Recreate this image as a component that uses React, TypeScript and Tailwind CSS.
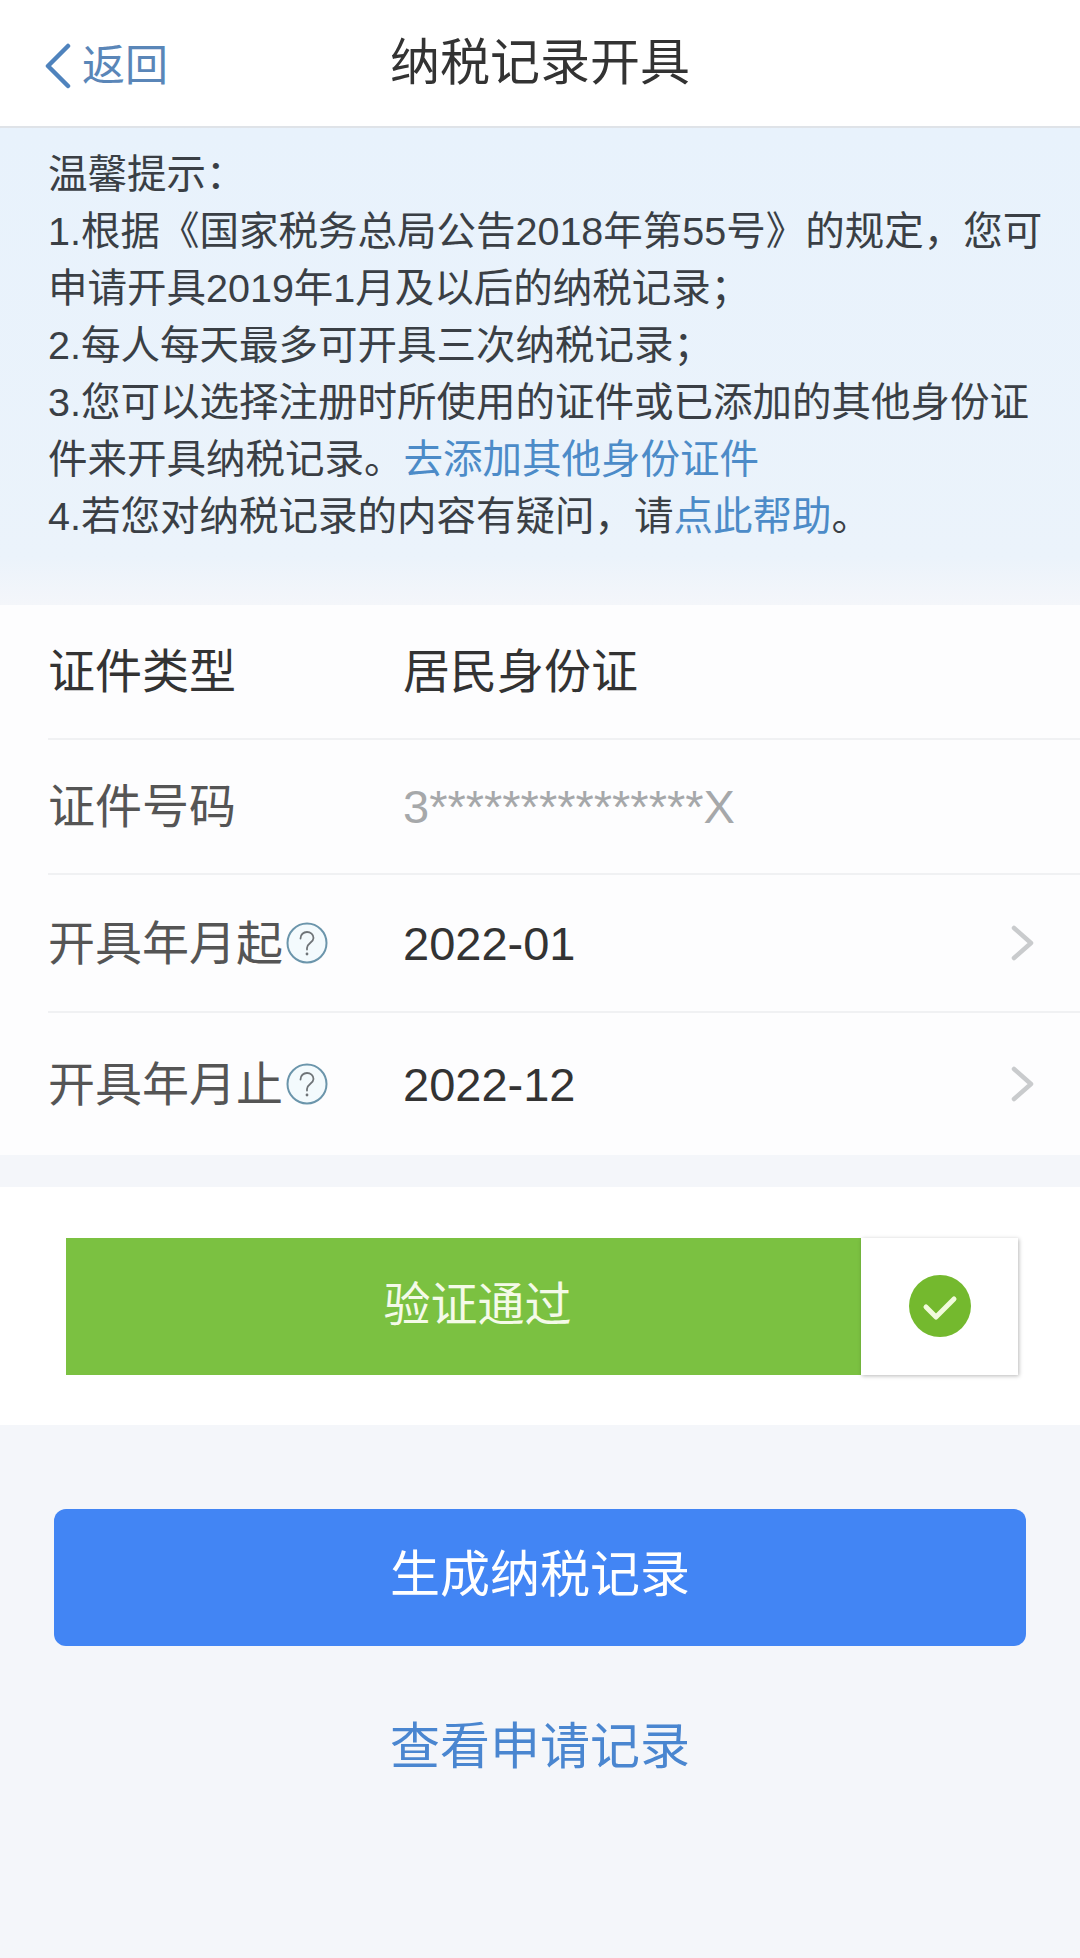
import React from 'react';

const fontStack = '"Liberation Sans", "Noto Sans CJK SC", sans-serif';

const HelpIcon = () => (
    <svg className="w-[42px] h-[42px] shrink-0 ml-[3px]" viewBox="0 0 42 42" fill="none">
        <circle cx="21" cy="21" r="19.5" fill="#f3fafd" stroke="#6b95ab" strokeWidth="2" />
        <path d="M14.5 16.5c0-4 3-6.5 6.5-6.5s6.5 2.5 6.5 6c0 4.5-6.5 5-6.5 10v1.5" stroke="#6f7478" strokeWidth="1.8" strokeLinecap="round" />
        <circle cx="21" cy="32" r="1.4" fill="#6f7478" />
    </svg>
);

const Chevron = () => (
    <svg className="w-[24px] h-[36px] shrink-0" viewBox="0 0 24 36" fill="none">
        <path d="M3 3l17 15L3 33" stroke="#c9cbcd" strokeWidth="4.5" strokeLinecap="round" strokeLinejoin="round" />
    </svg>
);

const FormRow = ({ height, label, labelClass, help, value, valueClass, arrow, border = true }: {
    height: string;
    label: string;
    labelClass: string;
    help?: boolean;
    value: string;
    valueClass: string;
    arrow?: boolean;
    border?: boolean;
}) => (
    <div className={`${height} flex items-center pr-[45px] ${border ? 'border-b-2 border-[#f0f1f3]' : ''}`}>
        <div className="w-[355px] flex items-center shrink-0">
            <span className={`text-[47px] leading-none ${labelClass}`}>{label}</span>
            {help && <HelpIcon />}
        </div>
        <span className={`flex-1 text-[47px] leading-none ${valueClass}`}>{value}</span>
        {arrow && <Chevron />}
    </div>
);

export default function App() {
    return (
        <div lang="zh-CN" className="w-[1080px] min-h-[1958px] bg-[#f4f6fa] flex flex-col" style={{ fontFamily: fontStack }}>
            {/* Header */}
            <div className="h-[128px] bg-white border-b-2 border-[#dfe3e8] grid grid-cols-[1fr_auto_1fr] items-center">
                <div className="flex items-center pl-[45px] pt-[6px]">
                    <svg className="w-[26px] h-[46px] shrink-0" viewBox="0 0 26 46" fill="none">
                        <path d="M23 3L3 23l20 20" stroke="#4f83bd" strokeWidth="4.5" strokeLinecap="round" strokeLinejoin="round" />
                    </svg>
                    <span className="ml-[11px] text-[43px] leading-none text-[#5a86b8]">返回</span>
                </div>
                <div className="text-[50px] leading-none text-[#333]">纳税记录开具</div>
                <div />
            </div>

            {/* Notice */}
            <div className="h-[477px] pt-[18px] pl-[48px] bg-gradient-to-b from-[#e8f2fc] via-[#ebf3fb] via-90% to-[#f4f6fa] text-[39.5px] leading-[57px] text-[#3a3f45] whitespace-nowrap">
                <div>温馨提示：</div>
                <div>1.根据《国家税务总局公告2018年第55号》的规定，您可</div>
                <div>申请开具2019年1月及以后的纳税记录；</div>
                <div>2.每人每天最多可开具三次纳税记录；</div>
                <div>3.您可以选择注册时所使用的证件或已添加的其他身份证</div>
                <div>件来开具纳税记录。<span className="text-[#4c8bc8]">去添加其他身份证件</span></div>
                <div>4.若您对纳税记录的内容有疑问，请<span className="text-[#4c8bc8]">点此帮助</span>。</div>
            </div>

            {/* Form */}
            <div className="bg-[#fdfdfe] pl-[48px]">
                <FormRow height="h-[135px]" label="证件类型" labelClass="text-[#333]" value="居民身份证" valueClass="text-[#333]" />
                <FormRow height="h-[135px]" label="证件号码" labelClass="text-[#555]" value="3***************X" valueClass="text-[#a6a8aa]" />
                <FormRow height="h-[138px]" label="开具年月起" labelClass="text-[#555]" help value="2022-01" valueClass="text-[#333]" arrow />
                <FormRow height="h-[142px]" label="开具年月止" labelClass="text-[#555]" help value="2022-12" valueClass="text-[#333]" arrow border={false} />
            </div>

            {/* Slider verify */}
            <div className="mt-[32px] h-[238px] bg-white flex items-center pl-[66px]">
                <div className="w-[952px] h-[137px] flex">
                    <div className="w-[795px] bg-[#7bc141] flex items-center justify-center pl-[28px] pb-[4px] text-[47px] leading-none text-[#f4fae8]">
                        验证通过
                    </div>
                    <div className="flex-1 bg-white flex items-center justify-center shadow-[1px_1px_4px_rgba(0,0,0,0.28)]">
                        <svg className="w-[62px] h-[62px]" viewBox="0 0 62 62" fill="none">
                            <circle cx="31" cy="31" r="31" fill="#74b92e" />
                            <path d="M17 32l10 10 18-18" stroke="#f1fbdc" strokeWidth="5" strokeLinecap="round" strokeLinejoin="round" />
                        </svg>
                    </div>
                </div>
            </div>

            {/* Actions */}
            <div className="mt-[84px] mx-[54px] h-[137px] bg-[#4285f4] rounded-[12px] flex items-center justify-center pb-[6px] text-[50px] leading-none text-white">
                生成纳税记录
            </div>
            <div className="mt-[76px] text-center text-[50px] leading-[50px] text-[#4a86d0]">查看申请记录</div>
        </div>
    );
}
